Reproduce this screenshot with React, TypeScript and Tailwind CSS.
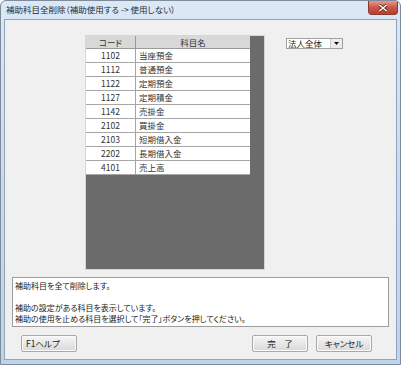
const ROWS: { code: string; name: string }[] = [
  { code: "1102", name: "当座預金" },
  { code: "1112", name: "普通預金" },
  { code: "1122", name: "定期預金" },
  { code: "1127", name: "定期積金" },
  { code: "1142", name: "売掛金" },
  { code: "2102", name: "買掛金" },
  { code: "2103", name: "短期借入金" },
  { code: "2202", name: "長期借入金" },
  { code: "4101", name: "売上高" },
];

function WinButton({ label, className = "" }: { label: string; className?: string }) {
  return (
    <button
      type="button"
      className={`h-[17px] w-[56px] rounded-[2px] border border-[#a8a8a8] bg-gradient-to-b from-[#f6f6f6] to-[#d9d9d9] text-[8.5px] leading-none text-[#222] shadow-[inset_0_0_0_1px_#fbfbfb] ${className}`}
    >
      {label}
    </button>
  );
}

export default function App() {
  return (
    <div className="relative h-[365px] w-[401px] overflow-hidden rounded-t-[6px] border border-[#7f8b99] bg-gradient-to-b from-[#dbe8f6] via-[#c9dbf0] to-[#bfd3ec] font-['Noto_Sans_CJK_JP','Noto_Sans',sans-serif] [font-feature-settings:'palt']">
      {/* Title bar */}
      <div className="flex h-[18px] items-start justify-between">
        <span className="pl-[5px] pt-[4px] text-[8.5px] leading-none text-[#2a2a2a]">
          補助科目全削除（補助使用する -&gt; 使用しない）
        </span>
        <div className="mr-[2px] flex h-[14px] w-[30px] items-center justify-center rounded-b-[4px] border border-t-0 border-[#8a3a30] bg-gradient-to-b from-[#e59a8c] via-[#c9574a] to-[#b8402f]">
          <svg width="10" height="8" viewBox="0 0 10 8">
            <path d="M1.5 1 L8.5 7 M8.5 1 L1.5 7" stroke="#5a2018" strokeWidth="3" />
            <path d="M1.5 1 L8.5 7 M8.5 1 L1.5 7" stroke="#ffffff" strokeWidth="1.6" />
          </svg>
        </div>
      </div>

      {/* Client area */}
      <div className="mx-[3px] flex h-[341px] flex-col border border-[#8fa3bd] bg-[#f0f0f0]">
        <div className="flex items-start pl-[80px] pt-[15px]">
          {/* Grid panel */}
          <div className="h-[235px] w-[180px] border border-[#d6d6d6] bg-[#6b6b6b]">
            <div className="w-[164px] bg-white">
              <div className="flex h-[13px] border-b border-[#9a9a9a] bg-[#d8d8d8] text-[8.5px] leading-none text-[#333]">
                <div className="flex w-[50px] items-center justify-center border-r border-[#9a9a9a]">コード</div>
                <div className="flex flex-1 items-center justify-center">科目名</div>
              </div>
              {ROWS.map((r) => (
                <div
                  key={r.code}
                  className="flex h-[14px] border-b border-[#a6a6a6] text-[8.5px] leading-none text-[#333]"
                >
                  <div className="flex w-[50px] items-center justify-center border-r border-[#a6a6a6]">{r.code}</div>
                  <div className="flex flex-1 items-center pl-[3px]">{r.name}</div>
                </div>
              ))}
            </div>
          </div>

          {/* Dropdown */}
          <div className="ml-[21px] mt-[3px] flex h-[11px] w-[57px] items-center border border-[#a0a0a0] bg-white text-[8.5px] leading-none text-[#222]">
            <span className="flex-1 pl-[1px]">法人全体</span>
            <div className="flex h-[9px] w-[12px] items-center justify-center border-l border-[#c8c8c8] bg-[#ececec]">
              <svg width="5" height="3" viewBox="0 0 5 3">
                <path d="M0 0 H5 L2.5 3 Z" fill="#111" />
              </svg>
            </div>
          </div>
        </div>

        {/* Message box */}
        <div className="mx-[7px] mt-[7px] h-[50px] border border-[#9c9c9c] bg-white px-[2px] pt-[2px] text-[8px] leading-[11px] text-[#222]">
          <p>補助科目を全て削除します。</p>
          <p>&nbsp;</p>
          <p>補助の設定がある科目を表示しています。</p>
          <p>補助の使用を止める科目を選択して「完了」ボタンを押してください。</p>
        </div>

        {/* Buttons */}
        <div className="mt-[8px] flex items-center pl-[16px] pr-[24px]">
          <WinButton label="F1ヘルプ" className="pl-[4px] text-left" />
          <div className="flex-1" />
          <WinButton label="完　了" />
          <WinButton label="キャンセル" className="ml-[8px]" />
        </div>
      </div>
    </div>
  );
}
